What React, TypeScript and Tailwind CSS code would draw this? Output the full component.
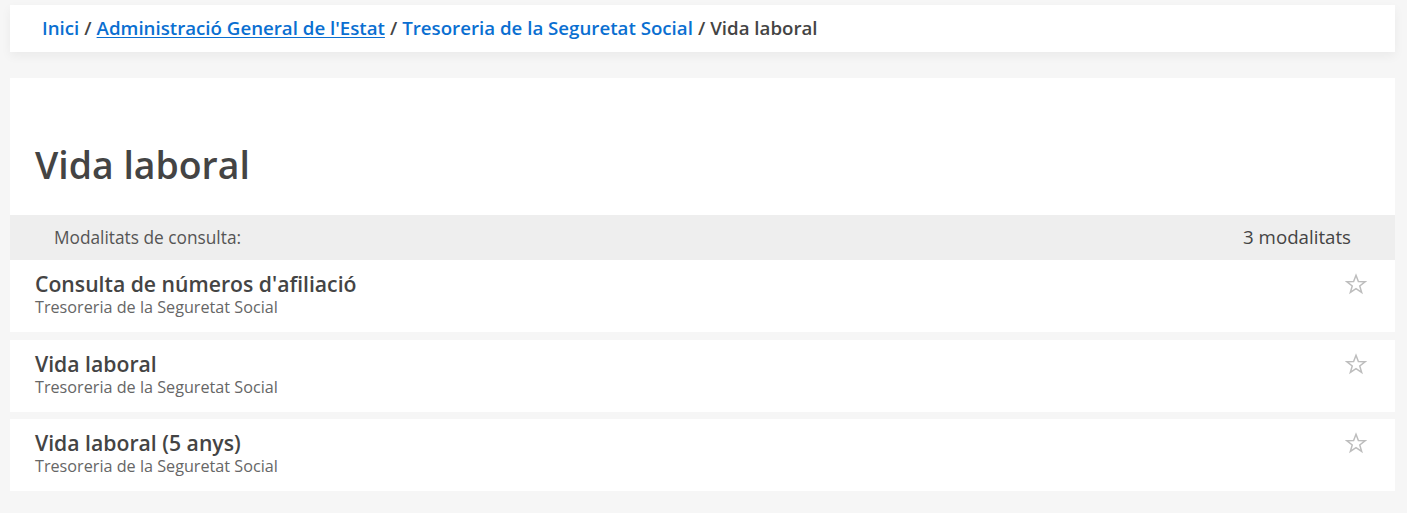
const items = [
  { title: "Consulta de números d'afiliació", org: "Tresoreria de la Seguretat Social" },
  { title: "Vida laboral", org: "Tresoreria de la Seguretat Social" },
  { title: "Vida laboral (5 anys)", org: "Tresoreria de la Seguretat Social" },
];

function Star() {
  return (
    <svg width="22" height="22" viewBox="0 0 24 24" fill="none" stroke="#bdbdbd" strokeWidth="1.6" strokeLinejoin="miter" aria-hidden="true">
      <path d="M12 2.5l2.6 6.9 7.2.2-5.7 4.5 2.1 7.1L12 17.1l-6.2 4.1 2.1-7.1-5.7-4.5 7.2-.2z" />
    </svg>
  );
}

export default function App() {
  return (
    <div className="min-h-[513px] bg-[#f6f6f6] pt-[5px] pl-[10px] pr-[12px] font-['Open_Sans',sans-serif] text-[#444]">
      <nav className="flex h-[47px] items-center bg-white px-[32px] text-[18.7px] font-semibold shadow-[0_4px_10px_rgba(0,0,0,0.05)]">
        <a className="text-[#0a6fd1]">Inici</a>
        <span className="px-[5px]">/</span>
        <a className="text-[#0a6fd1] underline underline-offset-2">Administració General de l'Estat</a>
        <span className="px-[5px]">/</span>
        <a className="text-[#0a6fd1]">Tresoreria de la Seguretat Social</a>
        <span className="px-[5px]">/</span>
        <span>Vida laboral</span>
      </nav>

      <main className="mt-[26px] bg-white">
        <h1 className="px-[25px] pt-[62px] pb-[26px] text-[37.4px] font-semibold leading-[49px] text-[#444]">Vida laboral</h1>
        <div className="flex h-[45px] items-center justify-between bg-[#eeeeee] pl-[44px] pr-[44px]">
          <span className="text-[17.3px] text-[#555]">Modalitats de consulta:</span>
          <span className="text-[18.7px] text-[#444]">3 modalitats</span>
        </div>
        <ul className="flex flex-col gap-[7.5px] bg-[#f6f6f6]">
          {items.map((item) => (
            <li key={item.title} className="flex h-[72px] items-start justify-between bg-white px-[25px] pt-[11px]">
              <div className="flex flex-col">
                <span className="text-[21.2px] font-semibold leading-[26px] text-[#444]">{item.title}</span>
                <span className="text-[16.2px] leading-[20px] text-[#666]">{item.org}</span>
              </div>
              <div className="pr-[3px] pt-[2px]">
                <Star />
              </div>
            </li>
          ))}
        </ul>
      </main>
    </div>
  );
}
